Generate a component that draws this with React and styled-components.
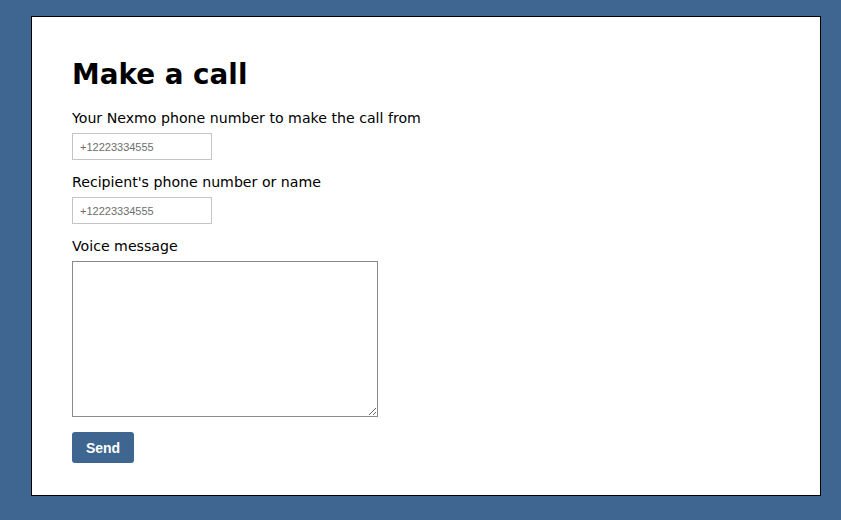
import styled, { createGlobalStyle } from "styled-components";

const GlobalStyle = createGlobalStyle`
  html, body {
    margin: 0;
    padding: 0;
    background: #3e6690;
  }
  body {
    font-family: "DejaVu Sans", Verdana, sans-serif;
  }
`;

const Page = styled.div`
  padding: 16px 20px 24px 31px;
`;

const Card = styled.div`
  background: #fff;
  border: 1px solid #000;
  height: 478px;
  box-sizing: content-box;
  padding: 0 40px;
`;

const Title = styled.h1`
  margin: 0;
  padding-top: 38px;
  font-size: 27.8px;
  font-weight: bold;
  line-height: 40px;
  color: #000;
`;

const Form = styled.form`
  display: flex;
  flex-direction: column;
  align-items: flex-start;
  margin-top: 13px;
`;

const Label = styled.label`
  display: block;
  font-size: 14.15px;
  line-height: 17px;
  color: #000;
  padding-top: 2px;
  margin-bottom: 6px;
`;

const Input = styled.input`
  box-sizing: border-box;
  width: 140px;
  height: 27px;
  border: 1px solid #c4c4c4;
  padding: 0 7px;
  font-family: "Liberation Sans", Arial, sans-serif;
  font-size: 11px;
  margin: 0 0 12px;
  &::placeholder {
    color: #6e6e6e;
  }
`;

const TextArea = styled.textarea`
  box-sizing: border-box;
  width: 306px;
  height: 156px;
  border: 1px solid #8a8a8a;
  margin: 0 0 15px;
  resize: both;
`;

const Button = styled.button`
  width: 62px;
  height: 31px;
  border: none;
  border-radius: 3px;
  background: #3e6690;
  color: #fff;
  font-family: "Liberation Sans", Arial, sans-serif;
  font-weight: bold;
  font-size: 14px;
  padding: 0;
`;

export default function App() {
  return (
    <>
      <GlobalStyle />
      <Page>
        <Card>
          <Title>Make a call</Title>
          <Form onSubmit={(e) => e.preventDefault()}>
            <Label>Your Nexmo phone number to make the call from</Label>
            <Input type="text" placeholder="+12223334555" />
            <Label>Recipient's phone number or name</Label>
            <Input type="text" placeholder="+12223334555" />
            <Label>Voice message</Label>
            <TextArea />
            <Button type="submit">Send</Button>
          </Form>
        </Card>
      </Page>
    </>
  );
}
